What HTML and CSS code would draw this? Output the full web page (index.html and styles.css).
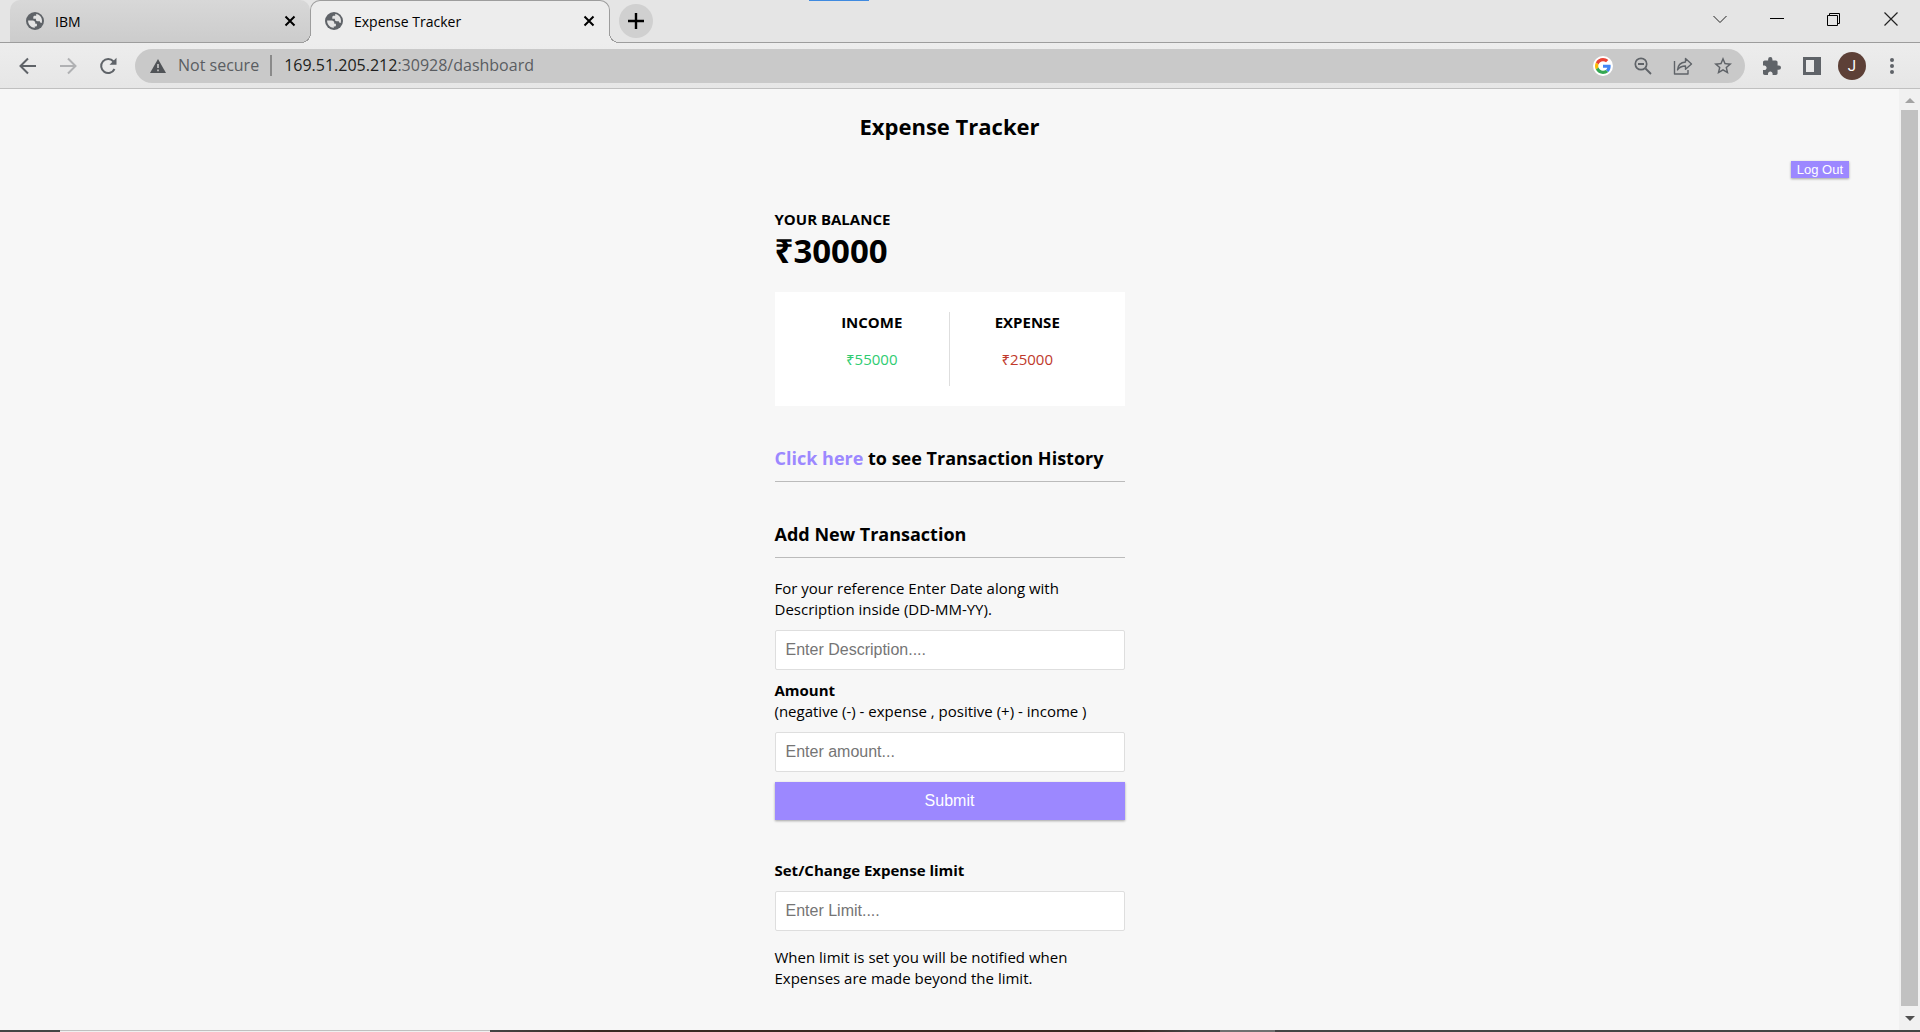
FILE: index.html
```html
<!DOCTYPE html>
<html lang="en">
<head>
<meta charset="utf-8">
<title>Expense Tracker</title>
<link rel="stylesheet" href="styles.css">
</head>
<body>
<svg class="symbols" aria-hidden="true">
  <symbol id="globe" viewBox="0 0 18 18">
    <circle cx="9" cy="9" r="9" fill="#5f6368"/>
    <path fill="#e4e4e4" d="M10.200 2.100C13.600 2.700 16 5.500 16 8.800c0 .9-.2 1.700-.4 2.300-.9-.2-1.600-.9-1.800-1.900H11.500c-.9 0-1.600-.7-1.600-1.600V6.800H7.300V5.200c0-.8.600-1.400 1.400-1.400h1.500z"/>
    <path fill="#e4e4e4" d="M2.100 8.600h4.700c1.400 0 2.500 1.100 2.500 2.500v.7h1.600v1.600c0 .7-.6 1.200-1.200 1.200h-1v1.300C5 15.700 2 12.700 2.100 8.600z"/>
  </symbol>
  <symbol id="cross" viewBox="0 0 12 12">
    <path d="M1.500 1.500l9 9M10.500 1.500l-9 9" stroke="#000" stroke-width="2"/>
  </symbol>
</svg>

<header class="browser">
  <div class="tabstrip">
    <div class="tab">
      <svg class="favicon"><use href="#globe"/></svg>
      <span class="tab-title">IBM</span>
      <button class="icon-btn" aria-label="Close IBM"><svg width="12" height="12"><use href="#cross"/></svg></button>
    </div>
    <div class="tab tab-active">
      <svg class="favicon"><use href="#globe"/></svg>
      <span class="tab-title">Expense Tracker</span>
      <button class="icon-btn" aria-label="Close Expense Tracker"><svg width="12" height="12"><use href="#cross"/></svg></button>
    </div>
    <button class="new-tab" aria-label="New tab"><svg width="16" height="16" viewBox="0 0 16 16"><path d="M8 0v16M0 8h16" stroke="#000" stroke-width="2.400"/></svg></button>
    <div class="window-controls">
      <button class="icon-btn" aria-label="Search tabs"><svg width="14" height="14" viewBox="0 0 14 14"><path d="M.5 4l6.500 6.500L13.500 4" fill="none" stroke="#222"/></svg></button>
      <button class="icon-btn" aria-label="Minimise"><svg width="14" height="14" viewBox="0 0 14 14"><path d="M0 6.500h14" stroke="#000"/></svg></button>
      <button class="icon-btn" aria-label="Restore"><svg width="14" height="14" viewBox="0 0 14 14"><path d="M.5 3.500h10v10H.5zM2.500 3.500v-2h10v10h-2" fill="none" stroke="#000"/></svg></button>
      <button class="icon-btn" aria-label="Close"><svg width="14" height="14" viewBox="0 0 14 14"><path d="M.5.5l13 13M13.500.5l-13 13" stroke="#222" stroke-width="1.200"/></svg></button>
    </div>
  </div>

  <div class="toolbar">
    <nav class="nav-buttons" aria-label="Navigation">
      <button class="icon-btn" aria-label="Back"><svg width="18" height="18" viewBox="0 0 18 18"><path d="M17 9H2M9 1.500L1.500 9 9 16.500" fill="none" stroke="#5f6368" stroke-width="2"/></svg></button>
      <button class="icon-btn" aria-label="Forward"><svg width="18" height="18" viewBox="0 0 18 18"><path d="M1 9h15M9 1.500L16.500 9 9 16.500" fill="none" stroke="#b0b1b3" stroke-width="2"/></svg></button>
      <button class="icon-btn" aria-label="Reload"><svg width="18" height="18" viewBox="0 0 18 18"><path d="M15.500 12A7 7 0 1 1 14.500 4.500" fill="none" stroke="#5f6368" stroke-width="2"/><path d="M17.500.8v7h-7z" fill="#5f6368"/></svg></button>
    </nav>
    <div class="omnibox">
      <svg class="warning" viewBox="0 0 16 14"><path d="M8 0l8 14H0z" fill="#505357"/><path d="M8 5v4M8 10.500v1.700" stroke="#c9c9c9" stroke-width="1.600"/></svg>
      <span class="secure">Not secure</span>
      <div class="url" role="textbox" aria-label="Address" contenteditable="true" spellcheck="false"><span class="host">169.51.205.212</span>:30928/dashboard</div>
      <div class="omni-actions">
        <button class="icon-btn google" aria-label="Search with Google"><svg width="16" height="16" viewBox="0 0 48 48"><path fill="#ea4335" d="M24 9.500c3.540 0 6.710 1.220 9.210 3.600l6.850-6.850C35.900 2.380 30.470 0 24 0 14.620 0 6.510 5.380 2.560 13.220l7.980 6.190C12.430 13.720 17.740 9.500 24 9.500z"/><path fill="#4285f4" d="M46.980 24.550c0-1.570-.15-3.090-.38-4.550H24v9.020h12.940c-.58 2.960-2.260 5.480-4.780 7.180l7.730 6c4.510-4.180 7.090-10.360 7.090-17.650z"/><path fill="#fbbc05" d="M10.530 28.590c-.48-1.450-.76-2.990-.76-4.590s.27-3.140.76-4.590l-7.980-6.190C.92 16.460 0 20.120 0 24c0 3.880.92 7.540 2.560 10.780l7.970-6.190z"/><path fill="#34a853" d="M24 48c6.480 0 11.930-2.130 15.890-5.810l-7.730-6c-2.150 1.450-4.920 2.300-8.160 2.300-6.260 0-11.570-4.220-13.470-9.910l-7.980 6.190C6.510 42.620 14.620 48 24 48z"/></svg></button>
        <button class="icon-btn" aria-label="Zoom out"><svg width="18" height="18" viewBox="0 0 18 18"><path d="M11.500 11.500l5.500 5.500M4 7h6" stroke="#5f6368" stroke-width="1.800"/><circle cx="7" cy="7" r="5.700" fill="none" stroke="#5f6368" stroke-width="1.700"/></svg></button>
        <button class="icon-btn" aria-label="Share"><svg width="20" height="18" viewBox="0 0 20 18"><path d="M1.500 4v13H15v-4M4.500 13C4.800 8 7.500 5.500 12.500 5V1.500L18.500 7l-6 5.200V9C8.500 9 6.200 10.200 4.500 13z" fill="none" stroke="#5f6368" stroke-width="1.400" stroke-linejoin="round"/></svg></button>
        <button class="icon-btn" aria-label="Bookmark"><svg width="18" height="18" viewBox="2 2 20 20"><path fill="#5f6368" d="M22 9.240l-7.190-.62L12 2 9.190 8.630 2 9.240l5.460 4.730L5.820 21 12 17.270 18.180 21l-1.630-7.030L22 9.240zM12 15.400l-3.760 2.270 1-4.280-3.320-2.880 4.380-.38L12 6.100l1.710 4.040 4.380.38-3.320 2.880 1 4.280L12 15.400z"/></svg></button>
      </div>
    </div>
    <div class="extensions">
      <button class="icon-btn" aria-label="Extensions"><svg width="18" height="18" viewBox="2 1 21 21"><path fill="#5f6368" d="M20.500 11H19V7c0-1.100-.9-2-2-2h-4V3.500a2.500 2.500 0 0 0-5 0V5H4c-1.100 0-2 .9-2 2v3.800h1.500c1.490 0 2.700 1.210 2.700 2.700s-1.210 2.700-2.700 2.700H2V20c0 1.100.9 2 2 2h3.800v-1.500c0-1.490 1.210-2.700 2.700-2.700s2.700 1.210 2.700 2.700V22H17c1.100 0 2-.9 2-2v-4h1.500a2.500 2.500 0 0 0 0-5z"/></svg></button>
      <button class="icon-btn" aria-label="Side panel"><svg width="18" height="18" viewBox="0 0 18 18"><path fill="#5f6368" fill-rule="evenodd" d="M0 0h18v18H0zM3 3v12h8V3z"/></svg></button>
      <button class="avatar" aria-label="Profile">J</button>
      <button class="icon-btn" aria-label="Menu"><svg width="4" height="16" viewBox="0 0 4 16"><g fill="#5f6368"><circle cx="2" cy="2" r="2"/><circle cx="2" cy="8" r="2"/><circle cx="2" cy="14" r="2"/></g></svg></button>
    </div>
  </div>
</header>

<div class="viewport">
  <main class="page">
    <h2 class="title">Expense Tracker</h2>
    <div class="logout-row"><button class="logout">Log Out</button></div>
    <div class="container">
      <h4 class="label">YOUR BALANCE</h4>
      <h1 class="balance">₹30000</h1>
      <section class="summary">
        <div class="summary-cell">
          <h4 class="label">INCOME</h4>
          <p class="money plus">₹55000</p>
        </div>
        <div class="summary-cell">
          <h4 class="label">EXPENSE</h4>
          <p class="money minus">₹25000</p>
        </div>
      </section>
      <h3 class="section-title"><a href="#history">Click here</a> to see Transaction History</h3>
      <h3 class="section-title">Add New Transaction</h3>
      <form class="entry-form">
        <label for="text">For your reference Enter Date along with Description inside (DD-MM-YY).</label>
        <input id="text" type="text" placeholder="Enter Description....">
        <label for="amount"><b>Amount</b><br>(negative (-) - expense , positive (+) - income )</label>
        <input id="amount" type="text" placeholder="Enter amount...">
        <button class="submit" type="submit">Submit</button>
      </form>
      <form class="limit-form">
        <label for="limit"><b>Set/Change Expense limit</b></label>
        <input id="limit" type="text" placeholder="Enter Limit....">
        <p class="note">When limit is set you will be notified when Expenses are made beyond the limit.</p>
      </form>
    </div>
  </main>
  <div class="scrollbar" aria-hidden="true">
    <svg width="10" height="5" viewBox="0 0 10 5"><path d="M0 5l5-5 5 5z" fill="#a3a3a3"/></svg>
    <div class="thumb"></div>
    <svg width="10" height="5" viewBox="0 0 10 5"><path d="M0 0l5 5 5-5z" fill="#505050"/></svg>
  </div>
</div>
<div class="taskbar-edge"></div>
</body>
</html>
```
FILE: styles.css
```css
* {
  box-sizing: border-box;
}

body {
  margin: 0;
  min-height: 100vh;
  display: flex;
  flex-direction: column;
  background: #f7f7f7;
  color: #000;
  font: 15px/21px "Open Sans", "Noto Sans", sans-serif;
}

button {
  border: 0;
  padding: 0;
  cursor: pointer;
}

svg {
  display: block;
}

.symbols {
  display: none;
}

.icon-btn {
  display: grid;
  place-items: center;
  flex: none;
  width: 20px;
  height: 20px;
  background: none;
}

/* Browser frame */
.tabstrip {
  display: flex;
  height: 43px;
  padding-left: 10px;
  background:
    linear-gradient(#3f8ae0, #3f8ae0) 809px 0 / 60px 1px no-repeat,
    #e5e5e5;
  border-bottom: 1px solid #9d9d9d;
}

.tab {
  display: flex;
  align-items: center;
  width: 300px;
  height: 42px;
  padding: 0 10px 0 16px;
  border-radius: 10px 10px 0 0;
  background: linear-gradient(#d8d8d8, #cccccc);
}

.tab-active {
  position: relative;
  height: 43px;
  border: 1px solid #9d9d9d;
  border-bottom: 0;
  background: #ededed;
  padding: 0 10px 2px 14px;
}

/* Curved feet where the active tab meets the toolbar */
.tab-active::before,
.tab-active::after {
  content: "";
  position: absolute;
  bottom: 0;
  width: 10px;
  height: 10px;
}

.tab-active::before {
  left: -10px;
  background: radial-gradient(circle at 0 0, transparent 9px, #9d9d9d 9px, #9d9d9d 10px, #ededed 10px);
}

.tab-active::after {
  right: -10px;
  background: radial-gradient(circle at 100% 0, transparent 9px, #9d9d9d 9px, #9d9d9d 10px, #ededed 10px);
}

.favicon {
  width: 18px;
  height: 18px;
  flex: none;
}

.tab-title {
  flex: 1;
  margin-left: 11px;
  font-size: 14px;
}

.new-tab {
  display: grid;
  place-items: center;
  width: 34px;
  height: 34px;
  margin: 4px 0 0 9px;
  border-radius: 50%;
  background: #d0d0d0;
}

.window-controls {
  display: flex;
  gap: 37px;
  margin: 9px 19px 0 auto;
}

.toolbar {
  display: flex;
  align-items: center;
  height: 46px;
  padding: 0 18px;
  background: linear-gradient(#ededed, #e6e6e6);
  border-bottom: 1px solid #c0c0c0;
}

.nav-buttons {
  display: flex;
  gap: 20px;
}

.omnibox {
  display: flex;
  align-items: center;
  flex: 1;
  height: 34px;
  margin: 0 17px;
  padding: 0 12px 0 15px;
  border-radius: 17px;
  background: #c9c9c9;
  color: #5a5d61;
  font-size: 16px;
}

.warning {
  width: 16px;
  height: 14px;
}

.secure {
  margin-left: 12px;
  padding-right: 11px;
  border-right: 2px solid #8a8a8a;
}

.url {
  flex: 1;
  margin-left: 12px;
}

.host {
  color: #1d1e20;
}

.omni-actions {
  display: flex;
  gap: 20px;
}

.google {
  border-radius: 50%;
  background: #fff;
}

.extensions {
  display: flex;
  align-items: center;
  gap: 20px;
}

.avatar {
  width: 28px;
  height: 28px;
  margin: 0 -4px;
  border-radius: 50%;
  background: #5d4037;
  color: #fff;
  font: 15px/28px Roboto, sans-serif;
}

/* Page */
.viewport {
  display: flex;
  flex: 1;
}

.page {
  flex: 1;
  padding: 21px 0 40px;
}

.title {
  margin: 0;
  font-size: 22px;
  line-height: 32px;
  text-align: center;
}

.logout-row {
  display: flex;
  justify-content: flex-end;
  margin: 19px 50px 31px;
}

.logout,
.submit {
  background: #9c88ff;
  box-shadow: 0 1px 3px rgba(0, 0, 0, 0.12), 0 1px 2px rgba(0, 0, 0, 0.24);
  color: #fff;
  font-family: "Liberation Sans", Arial, sans-serif;
}

.logout {
  height: 17px;
  padding: 0 6px;
  font-size: 13px;
  line-height: 17px;
}

.container {
  width: 350px;
  margin: 0 auto;
}

.label {
  margin: 0;
}

.balance {
  margin: 0 0 20px;
  font-size: 33px;
  line-height: 42px;
}

.summary {
  display: flex;
  padding: 20px;
  background: #fff;
}

.summary-cell {
  flex: 1;
  text-align: center;
}

.summary-cell:first-child {
  border-right: 1px solid #dedede;
}

.money {
  margin: 16px 0;
}

.plus {
  color: #2ecc71;
}

.minus {
  color: #c0392b;
}

.section-title {
  margin: 40px 0 0;
  padding-bottom: 10px;
  border-bottom: 1px solid #bbb;
  font-size: 18px;
  line-height: 25px;
}

.section-title a {
  color: #9c88ff;
  text-decoration: none;
}

.entry-form {
  margin-top: 20px;
}

.limit-form {
  margin-top: 40px;
}

label {
  display: block;
}

input {
  display: block;
  width: 100%;
  height: 40px;
  margin: 10px 0;
  padding: 0 10px;
  border: 1px solid #dedede;
  border-radius: 2px;
  background: #fff;
  font: 16px "Liberation Sans", Arial, sans-serif;
}

input::placeholder {
  color: #757575;
}

.submit {
  display: block;
  width: 100%;
  height: 38px;
  font-size: 16px;
}

.note {
  margin: 16px 0 0;
}

.scrollbar {
  display: flex;
  flex-direction: column;
  align-items: center;
  gap: 7px;
  width: 21px;
  padding: 9px 0;
  background: #f1f1f1;
}

.scrollbar svg:last-child {
  margin-top: 3px;
}

.thumb {
  flex: 1;
  width: 17px;
  background: #c1c1c1;
}

.taskbar-edge {
  height: 2px;
  background:
    linear-gradient(#c0c0c0 50%, #f0f0f0 50%) 60px 0 / 430px 2px no-repeat,
    linear-gradient(#707070, #707070) 1220px 0 / 55px 2px no-repeat,
    linear-gradient(90deg, #444 490px, #3a2822 600px, #3a2822 1130px, #444 1190px);
}
```
